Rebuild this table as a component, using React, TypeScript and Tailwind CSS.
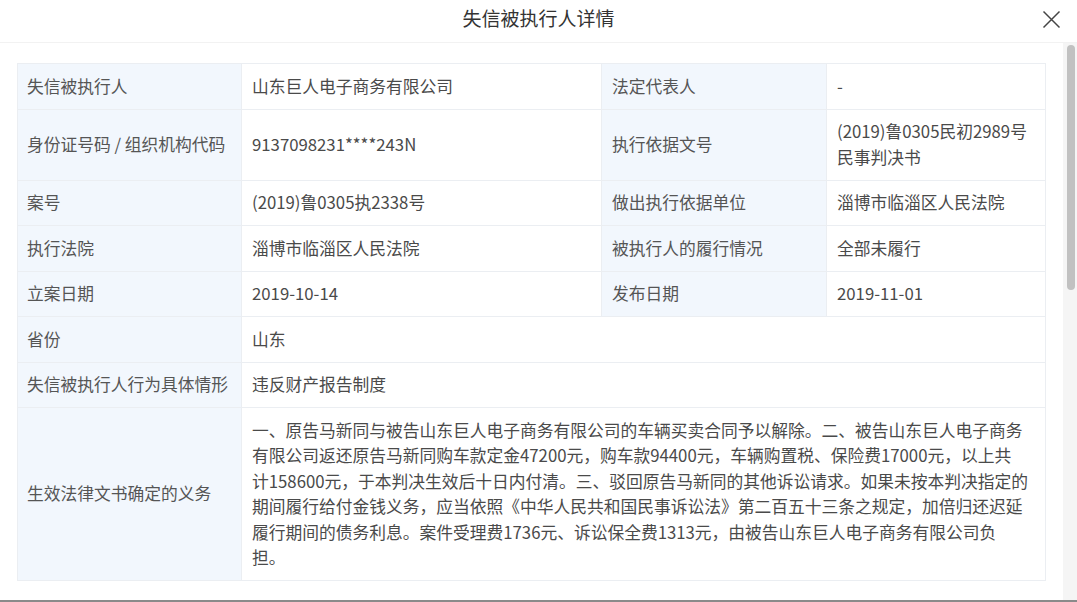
import React from "react";

type Row =
  | { kind: "pair"; l1: string; v1: React.ReactNode; l2: string; v2: React.ReactNode }
  | { kind: "wide"; l1: string; v1: React.ReactNode };

const judgment = [
  "一、原告马新同与被告山东巨人电子商务有限公司的车辆买卖合同予以解除。二、被告山东巨人电子商务",
  "有限公司返还原告马新同购车款定金47200元，购车款94400元，车辆购置税、保险费17000元，以上共",
  "计158600元，于本判决生效后十日内付清。三、驳回原告马新同的其他诉讼请求。如果未按本判决指定的",
  "期间履行给付金钱义务，应当依照《中华人民共和国民事诉讼法》第二百五十三条之规定，加倍归还迟延",
  "履行期间的债务利息。案件受理费1736元、诉讼保全费1313元，由被告山东巨人电子商务有限公司负",
  "担。",
];

const rows: Row[] = [
  { kind: "pair", l1: "失信被执行人", v1: "山东巨人电子商务有限公司", l2: "法定代表人", v2: "-" },
  {
    kind: "pair",
    l1: "身份证号码 / 组织机构代码",
    v1: "9137098231****243N",
    l2: "执行依据文号",
    v2: (
      <>
        (2019)鲁0305民初2989号
        <br />
        民事判决书
      </>
    ),
  },
  { kind: "pair", l1: "案号", v1: "(2019)鲁0305执2338号", l2: "做出执行依据单位", v2: "淄博市临淄区人民法院" },
  { kind: "pair", l1: "执行法院", v1: "淄博市临淄区人民法院", l2: "被执行人的履行情况", v2: "全部未履行" },
  { kind: "pair", l1: "立案日期", v1: "2019-10-14", l2: "发布日期", v2: "2019-11-01" },
  { kind: "wide", l1: "省份", v1: "山东" },
  { kind: "wide", l1: "失信被执行人行为具体情形", v1: "违反财产报告制度" },
  {
    kind: "wide",
    l1: "生效法律文书确定的义务",
    v1: judgment.map((line, i) => (
      <React.Fragment key={i}>
        {line}
        {i < judgment.length - 1 && <br />}
      </React.Fragment>
    )),
  },
];

const labelCls =
  "border border-[#ebeef2] bg-[#f2f7fd] pr-2 py-[9.5px] text-left align-middle font-normal text-[#555] whitespace-nowrap";
const valueCls =
  "border border-[#ebeef2] bg-white pl-[10px] pr-2 py-[9.5px] text-left align-middle text-[#4a4a4a] whitespace-nowrap";

export default function App() {
  return (
    <div
      className="flex h-[602px] w-[1077px] flex-col overflow-hidden bg-white"
      style={{ fontFamily: '"Noto Sans CJK SC", sans-serif' }}
    >
      {/* 标题栏 */}
      <div className="relative flex h-[43px] shrink-0 items-center justify-center border-b border-[#f2f2f2] pb-[5px]">
        <h2 className="text-[19px] font-normal text-[#333]">失信被执行人详情</h2>
        <button className="absolute right-[16px] top-[9px] flex h-[20px] w-[20px] items-center justify-center text-[#444]">
          <svg width="19" height="19" viewBox="0 0 19 19" fill="none" stroke="currentColor" strokeWidth="1.5">
            <path d="M1.5 1.5 L17.5 17.5 M17.5 1.5 L1.5 17.5" />
          </svg>
        </button>
      </div>

      {/* 内容 + 滚动条 */}
      <div className="flex min-h-0 flex-1">
        <div className="flex-1 overflow-hidden pl-[17px] pr-[18px] pt-[20px]">
          <table className="w-[1028px] table-fixed border-collapse text-[16.75px] leading-[25.5px]">
            <colgroup>
              <col className="w-[224px]" />
              <col className="w-[360px]" />
              <col className="w-[225px]" />
              <col className="w-[219px]" />
            </colgroup>
            <tbody>
              {rows.map((r, i) =>
                r.kind === "pair" ? (
                  <tr key={i}>
                    <th className={`${labelCls} pl-[9px]`}>{r.l1}</th>
                    <td className={valueCls}>{r.v1}</td>
                    <th className={`${labelCls} pl-[10px]`}>{r.l2}</th>
                    <td className={valueCls}>{r.v2}</td>
                  </tr>
                ) : (
                  <tr key={i}>
                    <th className={`${labelCls} pl-[9px]`}>{r.l1}</th>
                    <td className={valueCls} colSpan={3}>
                      {r.v1}
                    </td>
                  </tr>
                )
              )}
            </tbody>
          </table>
        </div>
        <div className="w-[14px] shrink-0 bg-[#f5f5f5] pl-[4px] pt-[2px]">
          <div className="h-[245px] w-[8px] rounded-[4px] bg-[#c1c1c1]" />
        </div>
      </div>

      <div className="h-[2px] shrink-0 bg-[#8a8a8a]" />
    </div>
  );
}
